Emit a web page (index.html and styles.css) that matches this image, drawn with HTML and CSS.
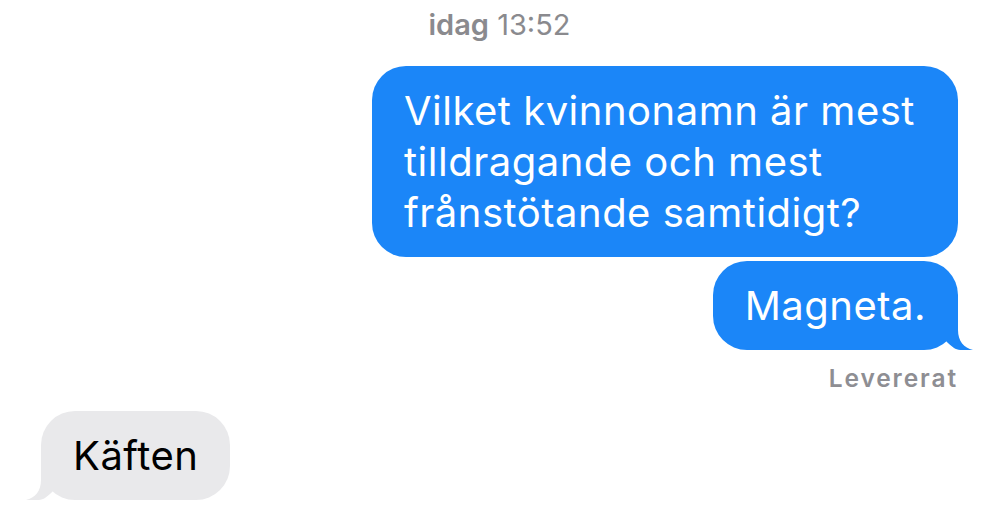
FILE: index.html
```html
<!DOCTYPE html>
<html lang="sv">
<head>
<meta charset="utf-8">
<title>Meddelanden</title>
<link rel="stylesheet" href="styles.css">
</head>
<body>
<main class="thread">
  <div class="stamp"><b>idag</b> 13:52</div>
  <div class="row sent">
    <div class="bubble sent-bubble wide">Vilket kvinnonamn är mest tilldragande och mest frånstötande samtidigt?</div>
  </div>
  <div class="row sent follow">
    <div class="bubble sent-bubble">Magneta.<svg class="tail tail-right" viewBox="0 0 34 42" width="34" height="42" aria-hidden="true"><path d="M2 2 L18 2 L18 22 C18 33 24 40 33 42 C26 42.8 18 42.5 14 40 C11 38 8 35 6 33 L2 33 Z"/></svg></div>
  </div>
  <div class="status">Levererat</div>
  <div class="row received">
    <div class="bubble recv-bubble">Käften<svg class="tail tail-left" viewBox="0 0 34 42" width="34" height="42" aria-hidden="true"><path d="M2 2 L18 2 L18 22 C18 33 24 40 33 42 C26 42.8 18 42.5 14 40 C11 38 8 35 6 33 L2 33 Z"/></svg></div>
  </div>
</main>
</body>
</html>
```

FILE: styles.css
```css
html, body {
  margin: 0;
  background: #ffffff;
}

body {
  width: 1000px;
  height: 516px;
  overflow: hidden;
  font-family: Inter, "Noto Sans", "Liberation Sans", sans-serif;
}

.thread {
  display: flex;
  flex-direction: column;
  padding: 8px 42px 0 41px;
}

.stamp {
  align-self: center;
  font-size: 29px;
  line-height: 34px;
  color: #8a8a8e;
  margin-bottom: 24px;
}

.stamp b {
  font-weight: 600;
}

.row {
  display: flex;
}

.row.sent {
  justify-content: flex-end;
}

.row.follow {
  margin-top: 4px;
}

.bubble {
  position: relative;
  box-sizing: border-box;
  font-size: 40px;
  line-height: 51px;
  padding: 19px 32px;
  border-radius: 34px;
  letter-spacing: 0.5px;
}

.sent-bubble {
  background: #1b86f8;
  color: #ffffff;
}

.wide {
  max-width: 586px;
}

.recv-bubble {
  background: #e9e9eb;
  color: #000000;
}

.tail {
  position: absolute;
  bottom: 0;
}

.tail-right {
  right: -16px;
  fill: #1b86f8;
}

.tail-left {
  left: -16px;
  fill: #e9e9eb;
  transform: scaleX(-1);
}

.status {
  align-self: flex-end;
  margin-top: 14px;
  font-size: 24.5px;
  line-height: 28px;
  font-weight: 600;
  letter-spacing: 1.9px;
  color: #8e8e93;
}

.row.received {
  margin-top: 18.5px;
}
```
